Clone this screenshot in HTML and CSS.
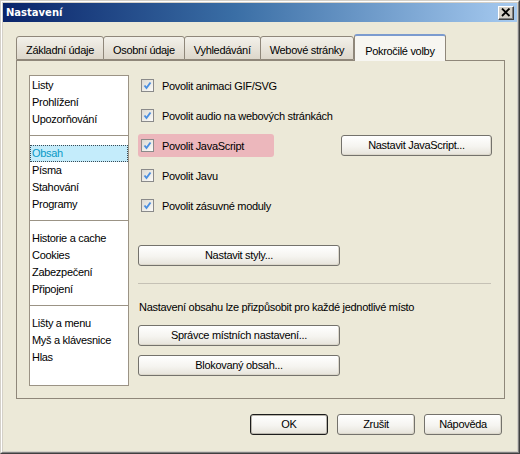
FILE: index.html
```html
<!DOCTYPE html>
<html lang="cs">
<head>
<meta charset="utf-8">
<title>Nastavení</title>
<link rel="stylesheet" href="styles.css">
</head>
<body>
<div class="window">
  <div class="frame">
    <div class="titlebar">
      <span class="title">Nastavení</span>
      <span class="close"><svg width="10" height="9" viewBox="0 0 10 9"><path d="M1 0.5 L8.5 8 M8.5 0.5 L1 8" stroke="#000" stroke-width="1.8" fill="none"/></svg></span>
    </div>
    <div class="body">
      <div class="tabs">
        <span class="tab">Základní údaje</span>
        <span class="tab">Osobní údaje</span>
        <span class="tab">Vyhledávání</span>
        <span class="tab">Webové stránky</span>
        <span class="tab active">Pokročilé volby</span>
      </div>
      <div class="panel">
        <div class="nav">
          <ul class="nav-group first">
            <li>Listy</li>
            <li>Prohlížení</li>
            <li>Upozorňování</li>
          </ul>
          <ul class="nav-group">
            <li class="selected">Obsah</li>
            <li>Písma</li>
            <li>Stahování</li>
            <li>Programy</li>
          </ul>
          <ul class="nav-group">
            <li>Historie a cache</li>
            <li>Cookies</li>
            <li>Zabezpečení</li>
            <li>Připojení</li>
          </ul>
          <ul class="nav-group last">
            <li>Lišty a menu</li>
            <li>Myš a klávesnice</li>
            <li>Hlas</li>
          </ul>
        </div>
        <div class="options">
          <div class="checks">
            <div class="row"><label class="check"><span class="box"><svg width="11" height="11" viewBox="0 0 11 11"><path d="M2.5 5.5 L4.5 8 L8.5 2.5" stroke="#4a8fe0" stroke-width="1.9" fill="none"/></svg></span>Povolit animaci GIF/SVG</label></div>
            <div class="row"><label class="check"><span class="box"><svg width="11" height="11" viewBox="0 0 11 11"><path d="M2.5 5.5 L4.5 8 L8.5 2.5" stroke="#4a8fe0" stroke-width="1.9" fill="none"/></svg></span>Povolit audio na webových stránkách</label></div>
            <div class="row"><label class="check hl"><span class="box"><svg width="11" height="11" viewBox="0 0 11 11"><path d="M2.5 5.5 L4.5 8 L8.5 2.5" stroke="#4a8fe0" stroke-width="1.9" fill="none"/></svg></span>Povolit JavaScript</label><button class="btn btn-js">Nastavit JavaScript...</button></div>
            <div class="row"><label class="check"><span class="box"><svg width="11" height="11" viewBox="0 0 11 11"><path d="M2.5 5.5 L4.5 8 L8.5 2.5" stroke="#4a8fe0" stroke-width="1.9" fill="none"/></svg></span>Povolit Javu</label></div>
            <div class="row"><label class="check"><span class="box"><svg width="11" height="11" viewBox="0 0 11 11"><path d="M2.5 5.5 L4.5 8 L8.5 2.5" stroke="#4a8fe0" stroke-width="1.9" fill="none"/></svg></span>Povolit zásuvné moduly</label></div>
          </div>
          <button class="btn btn-wide styles-btn">Nastavit styly...</button>
          <div class="separator"></div>
          <p class="note">Nastavení obsahu lze přizpůsobit pro každé jednotlivé místo</p>
          <button class="btn btn-wide site-btn">Správce místních nastavení...</button>
          <button class="btn btn-wide block-btn">Blokovaný obsah...</button>
        </div>
      </div>
      <div class="actions">
        <button class="btn btn-dlg default">OK</button>
        <button class="btn btn-dlg">Zrušit</button>
        <button class="btn btn-dlg">Nápověda</button>
      </div>
    </div>
  </div>
</div>
</body>
</html>
```

FILE: styles.css
```css
* { box-sizing: border-box; }

html, body {
  margin: 0;
  padding: 0;
  background: #ece9d8;
}

body {
  font-family: "Liberation Sans", Arial, sans-serif;
  font-size: 11px;
  letter-spacing: -0.3px;
  color: #000;
}

.window {
  width: 520px;
  height: 454px;
  border: 1px solid;
  border-color: #d4d0c8 #404040 #404040 #d4d0c8;
  background: #d4d0c8;
}

.frame {
  height: 100%;
  border: 1px solid;
  border-color: #ffffff #808080 #808080 #ffffff;
  padding: 1px;
  display: flex;
  flex-direction: column;
}

.titlebar {
  height: 19px;
  flex: none;
  display: flex;
  align-items: center;
  justify-content: space-between;
  padding: 0 3px 0 3px;
  background: linear-gradient(to right, #0a246a 0%, #3a6ea5 45%, #a6caf0 100%);
}

.title {
  color: #fff;
  font-family: "DejaVu Sans", Verdana, sans-serif;
  font-weight: bold;
  font-size: 10px;
  letter-spacing: 0;
  line-height: 19px;
}

.close {
  width: 16px;
  height: 14px;
  display: flex;
  align-items: center;
  justify-content: center;
  background: #d4d0c8;
  border: 1px solid;
  border-color: #ffffff #404040 #404040 #ffffff;
  box-shadow: inset -1px -1px 0 #808080;
}

.body {
  flex: 1;
  background: #ece9d8;
  padding: 13px 12px 0 13px;
  display: flex;
  flex-direction: column;
}

.tabs {
  display: flex;
  align-items: flex-end;
  height: 25px;
  position: relative;
  z-index: 1;
}

.tab {
  height: 24px;
  padding: 3px 9px 0 9px;
  line-height: 20px;
  white-space: nowrap;
  background: linear-gradient(#f3f1ea, #ddd7cb);
  border: 1px solid #8f877a;
  border-bottom: 1px solid #8f877a;
  border-radius: 3px 3px 0 0;
  margin-left: -1px;
}

.tab:first-child { margin-left: 0; }

.tab.active {
  height: 27px;
  margin-bottom: -1px;
  margin-left: 0;
  padding: 5px 10px 0 10px;
  background: #f7f6f1;
  border-color: #8f877a;
  border-top: 2px solid #7b9bcf;
  border-bottom: none;
}

.panel {
  height: 339px;
  border: 1px solid #8f877a;
  background: #ece9d8;
  padding: 13px 12px 0 12px;
  display: flex;
  gap: 9px;
}

.nav {
  width: 100px;
  height: 311px;
  margin-top: 1px;
  border: 1px solid #9b9385;
  background: #fff;
  flex: none;
}

.nav-group {
  list-style: none;
  margin: 0;
  padding: 9px 0 7px 0;
  border-bottom: 1px solid #9b9385;
}

.nav-group.first { padding-top: 1px; }
.nav-group.last { border-bottom: none; }

.nav-group li {
  height: 17px;
  line-height: 17px;
  padding-left: 2px;
  white-space: nowrap;
}

.nav-group li.selected {
  background: #c4ecfb;
  color: #0899c7;
  outline: 1px dotted #3a4a55;
  outline-offset: -1px;
}

.options {
  width: 354px;
  display: flex;
  flex-direction: column;
  align-items: flex-start;
}

.checks {
  width: 100%;
  display: flex;
  flex-direction: column;
  gap: 7px;
}

.row {
  height: 23px;
  display: flex;
  align-items: center;
  justify-content: space-between;
}

.check {
  height: 23px;
  display: flex;
  align-items: center;
  gap: 8px;
  padding: 0 0 0 3px;
  white-space: nowrap;
}

.check.hl {
  width: 136px;
  background: #ecb7bc;
  border-radius: 3px;
}

.box {
  width: 13px;
  height: 13px;
  border: 1px solid #8a8a8a;
  background: linear-gradient(135deg, #dcdad2, #fbfbf9);
  display: flex;
  align-items: center;
  justify-content: center;
  flex: none;
}

.btn {
  font-family: "Liberation Sans", Arial, sans-serif;
  font-size: 11px;
  letter-spacing: -0.3px;
  color: #000;
  height: 21px;
  padding: 0;
  border: 1px solid #74726c;
  border-radius: 3px;
  background: linear-gradient(#ffffff, #f5f4f0 55%, #e6e3da);
  line-height: 19px;
  text-align: center;
  box-shadow: inset -1px -1px 0 #dcd8cc;
}

.btn-js { width: 151px; }

.btn-wide { width: 202px; }

.styles-btn { margin-top: 28px; }

.separator {
  width: 353px;
  height: 1px;
  margin-top: 17px;
  background: #c5c1b5;
}

.note {
  margin: 16px 0 0 1px;
  line-height: 14px;
  white-space: nowrap;
}

.site-btn { margin-top: 11px; }
.block-btn { margin-top: 9px; }

.actions {
  display: flex;
  justify-content: flex-end;
  gap: 9px;
  margin-top: 15px;
  padding-right: 3px;
}

.btn-dlg { width: 78px; }

.btn.default {
  border-color: #1c1c1c;
  box-shadow: inset 0 0 0 1px #b9b6ad;
}
```
